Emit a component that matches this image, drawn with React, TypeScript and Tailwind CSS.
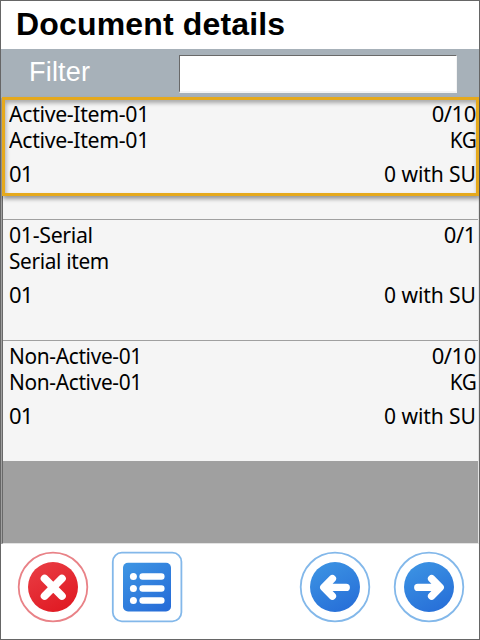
import React from "react";

type Item = {
  code: string;
  name: string;
  qty: string;
  unit: string;
  codeSqueeze: string;
  nameSqueeze: string;
};

const items: Item[] = [
  { code: "Active-Item-01", name: "Active-Item-01", qty: "0/10", unit: "KG", codeSqueeze: "scale-x-[0.968]", nameSqueeze: "scale-x-[0.968]" },
  { code: "01-Serial", name: "Serial item", qty: "0/1", unit: "", codeSqueeze: "scale-x-[0.97]", nameSqueeze: "scale-x-[0.945]" },
  { code: "Non-Active-01", name: "Non-Active-01", qty: "0/10", unit: "KG", codeSqueeze: "scale-x-[0.948]", nameSqueeze: "scale-x-[0.948]" },
];

function Row({ item }: { item: Item }) {
  return (
    <div className="h-[121px] border-b border-[#a0a0a0] bg-[#f5f5f5] pl-[6px] pr-[2px] pt-px first:h-[122px] first:pt-[2px] last:h-[120px] last:border-b-0">
      <div className="flex h-[26px] justify-between">
        <span className={`origin-left tracking-[-0.35px] ${item.codeSqueeze}`}>{item.code}</span>
        <span className="tracking-[-0.4px]">{item.qty}</span>
      </div>
      <div className="flex h-[26px] justify-between">
        <span className={`origin-left tracking-[-0.35px] ${item.nameSqueeze}`}>{item.name}</span>
        <span className="origin-right scale-x-[0.94] tracking-[-0.4px]">{item.unit}</span>
      </div>
      <div className="mt-[8px] flex h-[26px] justify-between">
        <span className="tracking-[-0.8px]">01</span>
        <span className="origin-right scale-x-[0.957] tracking-[-0.1px]">0 with SU</span>
      </div>
    </div>
  );
}

function Arrow({ flipped, id }: { flipped?: boolean; id: string }) {
  return (
    <svg width="72" height="72" viewBox="0 0 72 72">
      <defs>
        <linearGradient id={id} x1="0.2" y1="0" x2="0.7" y2="1">
          <stop offset="0" stopColor="#3c93e3" />
          <stop offset="1" stopColor="#276fd8" />
        </linearGradient>
      </defs>
      <circle cx="36" cy="36" r="34.3" fill="#fff" stroke="#83b8ea" strokeWidth="1.8" />
      <circle cx="36" cy="36" r="25" fill={`url(#${id})`} />
      <path
        d="M33.4 27.6L24.8 36.4L33.4 45.2M25.4 36.4H47.2"
        transform={flipped ? "translate(72 0) scale(-1 1)" : undefined}
        fill="none"
        stroke="#fff"
        strokeWidth="7.4"
        strokeLinecap="round"
        strokeLinejoin="round"
      />
    </svg>
  );
}

function CancelIcon() {
  return (
    <svg width="72" height="72" viewBox="0 0 72 72">
      <defs>
        <linearGradient id="cancel" x1="0.2" y1="0" x2="0.75" y2="1">
          <stop offset="0" stopColor="#e93c43" />
          <stop offset="1" stopColor="#e01922" />
        </linearGradient>
      </defs>
      <circle cx="36" cy="36" r="34.3" fill="#fff" stroke="#e98287" strokeWidth="1.8" />
      <circle cx="36" cy="36" r="25" fill="url(#cancel)" />
      <path d="M27.6 27.6L44.9 44.9M44.9 27.6L27.6 44.9" stroke="#fff" strokeWidth="7.8" strokeLinecap="round" />
    </svg>
  );
}

function ListIcon() {
  return (
    <svg width="72" height="72" viewBox="0 0 72 72">
      <defs>
        <linearGradient id="list" x1="0.1" y1="0" x2="0.8" y2="1">
          <stop offset="0" stopColor="#3d94e3" />
          <stop offset="1" stopColor="#276dd8" />
        </linearGradient>
      </defs>
      <rect x="1.8" y="1.7" width="68.6" height="68.6" rx="9" fill="#fff" stroke="#83b8ea" strokeWidth="1.8" />
      <rect x="12" y="11.8" width="48" height="48.6" rx="5" fill="url(#list)" />
      {[25.5, 37.5, 49.5].map((y) => (
        <g key={y} fill="#fff">
          <circle cx="22.4" cy={y} r="3.5" />
          <rect x="28.4" y={y - 3.2} width="25.2" height="6.4" rx="3.2" />
        </g>
      ))}
    </svg>
  );
}

export default function App() {
  return (
    <div className="relative flex h-[640px] w-[480px] flex-col border border-[#666666] bg-white">
      <header className="h-[48px] pl-[15px] font-['Liberation_Sans',sans-serif] text-[32px] font-bold leading-[46px] text-black">
        <span className="tracking-[0.16px]">Document details</span>
      </header>
      <div className="flex h-[49px] items-start bg-[#a7b1b9] font-['Liberation_Sans',sans-serif]">
        <label htmlFor="filter" className="w-[178px] pl-[28px] text-[27px] leading-[47px] tracking-[0.2px] text-white">
          Filter
        </label>
        <input
          id="filter"
          className="mt-[6px] h-[38px] w-[278px] border border-b-2 border-[#696969] border-b-[#f4f4f4] border-r-[#f4f4f4] bg-white px-1 text-[22px] text-black outline-none"
        />
      </div>
      <div className="h-[446px] border-l border-[#a0a0a0]">
        <main className="h-full border-b border-l border-r border-b-[#e3e3e3] border-l-[#696969] border-r-[#e3e3e3] bg-[#a0a0a0] font-['Noto_Sans',sans-serif] text-[22px] leading-[26px] text-black">
          {items.map((item, i) => (
            <Row key={i} item={item} />
          ))}
        </main>
      </div>
      <footer className="flex flex-1 justify-between bg-white pl-[16px] pr-[14px] pt-[7px]">
        <div className="flex gap-[22px]">
          <button type="button" aria-label="Cancel" className="size-[72px]">
            <CancelIcon />
          </button>
          <button type="button" aria-label="List" className="size-[72px]">
            <ListIcon />
          </button>
        </div>
        <div className="flex gap-[22px]">
          <button type="button" aria-label="Previous" className="size-[72px]">
            <Arrow id="prev" />
          </button>
          <button type="button" aria-label="Next" className="size-[72px]">
            <Arrow id="next" flipped />
          </button>
        </div>
      </footer>
      <div className="pointer-events-none absolute left-[1px] top-[96px] h-[99px] w-[477px] border-[3px] border-[#e5a91d] shadow-[1px_3px_4px_rgba(0,0,0,0.38),inset_1px_3px_4px_rgba(0,0,0,0.32)]" />
    </div>
  );
}
